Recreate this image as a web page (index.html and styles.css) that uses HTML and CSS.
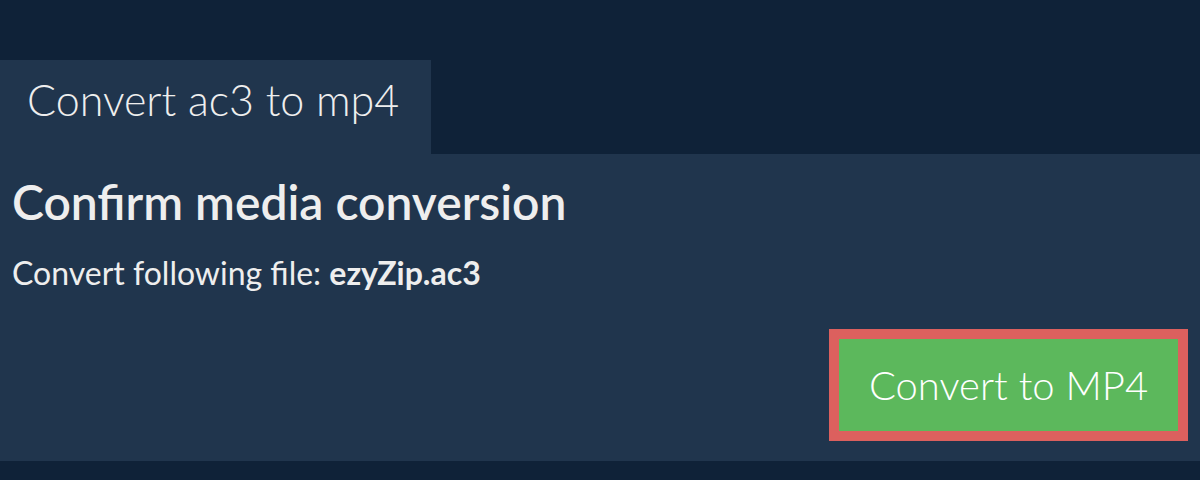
FILE: index.html
```html
<!DOCTYPE html>
<html lang="en">
<head>
<meta charset="utf-8">
<title>Convert ac3 to mp4</title>
<link rel="stylesheet" href="styles.css">
</head>
<body>
<div class="page">
  <div class="tabs">
    <div class="tab">Convert ac3 to mp4</div>
  </div>
  <div class="panel">
    <h2 class="title">Confirm media conversion</h2>
    <p class="file">Convert following file: <b>ezyZip.ac3</b></p>
    <div class="actions">
      <button class="convert">Convert to MP4</button>
    </div>
  </div>
</div>
</body>
</html>
```
FILE: styles.css
```css
html, body {
  margin: 0;
  padding: 0;
  background: #0f2238;
  font-family: Lato, "Open Sans", sans-serif;
  color: #eeeeee;
}
.page {
  padding-top: 60px;
}
.tabs {
  display: flex;
}
.tab {
  background: #20354d;
  width: 431px;
  height: 94px;
  box-sizing: border-box;
  padding: 14px 0 0 27px;
  font-size: 43px;
  font-weight: 300;
  line-height: 52px;
}
.panel {
  background: #20354d;
  padding: 19px 12px 20px 12px;
}
.title {
  margin: 0;
  font-size: 48px;
  font-weight: 600;
  line-height: 58px;
}
.file {
  margin: 23px 0 0 0;
  font-size: 32px;
  font-weight: 400;
  line-height: 38px;
}
.file b {
  font-weight: 700;
}
.actions {
  display: flex;
  justify-content: flex-end;
  margin-top: 37px;
}
.convert {
  background: #5cb85c;
  border: 10px solid #dc605e;
  color: #ffffff;
  font-family: Lato, "Open Sans", sans-serif;
  font-size: 40px;
  font-weight: 300;
  width: 359px;
  height: 112px;
  padding: 0;
  cursor: pointer;
}
```
